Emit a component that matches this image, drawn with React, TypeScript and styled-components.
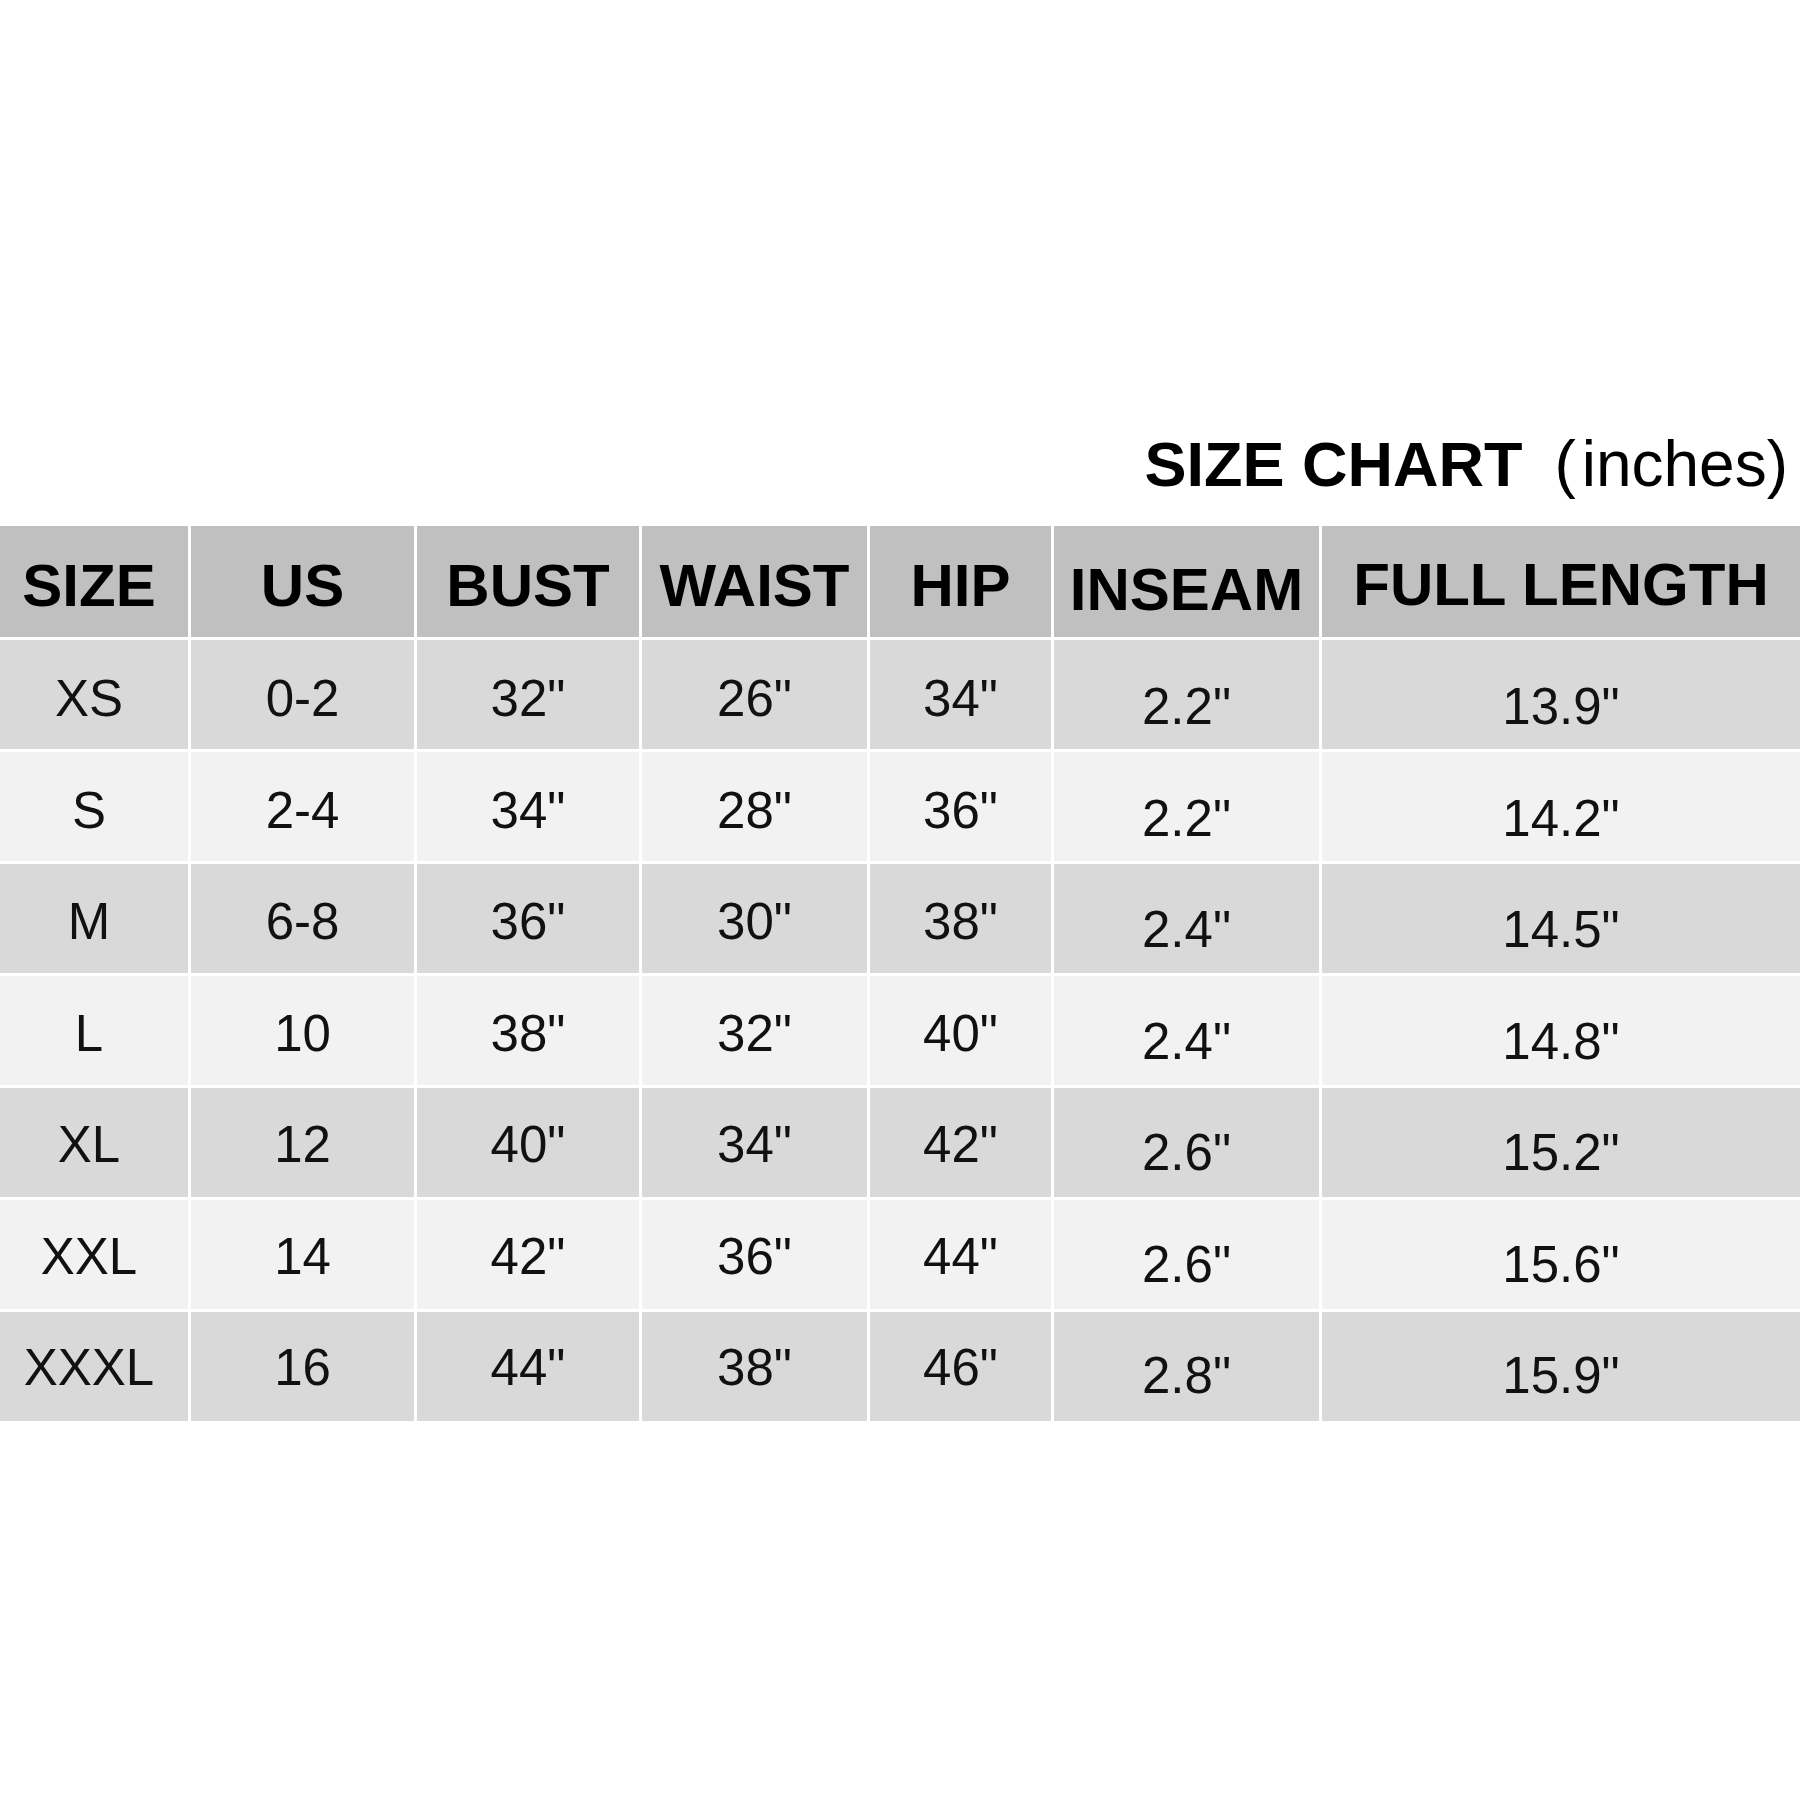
import React from "react";
import styled, { createGlobalStyle } from "styled-components";

const Global = createGlobalStyle`
  html, body {
    margin: 0;
    padding: 0;
    background: #ffffff;
  }
  body {
    font-family: "Liberation Sans", Arial, sans-serif;
    color: #000;
  }
`;

const Page = styled.div`
  width: 1800px;
  height: 1800px;
  box-sizing: border-box;
  padding-top: 432px;
  display: flex;
  flex-direction: column;
  background: #ffffff;
`;

const Title = styled.div`
  height: 64px;
  margin-bottom: 30px;
  padding-right: 12px;
  display: flex;
  justify-content: flex-end;
  align-items: baseline;
  line-height: 1;
  color: #000;
  font-family: "Liberation Sans", Arial, sans-serif;
`;

const TitleMain = styled.span`
  font-weight: 700;
  font-size: 63px;
  margin-right: 32px;
`;

const TitleUnit = styled.span`
  font-weight: 400;
  font-size: 64px;
`;

const Paren = styled.span`
  margin-right: 6px;
`;

const Table = styled.div`
  display: grid;
  grid-template-columns: 188px 223px 222px 225px 181px 265px 1fr;
  grid-template-rows: 111px;
  grid-auto-rows: 109px;
  column-gap: 3px;
  row-gap: 3px;
  background: #ffffff;
`;

const HeadCell = styled.div<{ $shift: number; $first: boolean }>`
  background: #c0c0c0;
  display: flex;
  align-items: center;
  justify-content: center;
  box-sizing: border-box;
  padding-top: ${(p) => 8 + p.$shift * 2}px;
  padding-right: ${(p) => (p.$first ? 10 : 0)}px;
  font-family: "Liberation Sans", Arial, sans-serif;
  font-weight: 700;
  font-size: 60px;
  line-height: 1;
  color: #000;
  white-space: nowrap;
`;

const Cell = styled.div<{ $odd: boolean; $drop: number; $first: boolean }>`
  background: ${(p) => (p.$odd ? "#d9d9d9" : "#f2f2f2")};
  display: flex;
  align-items: center;
  justify-content: center;
  box-sizing: border-box;
  padding-top: ${(p) => p.$drop}px;
  padding-right: ${(p) => (p.$first ? 10 : 0)}px;
  font-family: "Liberation Sans", Arial, sans-serif;
  font-weight: 400;
  font-size: 51px;
  line-height: 1;
  color: #111;
  white-space: nowrap;
`;

const headers: { label: string; shift: number }[] = [
  { label: "SIZE", shift: 0 },
  { label: "US", shift: 0 },
  { label: "BUST", shift: 0 },
  { label: "WAIST", shift: 0 },
  { label: "HIP", shift: 0 },
  { label: "INSEAM", shift: 4 },
  { label: "FULL LENGTH", shift: -1 },
];

const rows: string[][] = [
  ["XS", "0-2", '32"', '26"', '34"', '2.2"', '13.9"'],
  ["S", "2-4", '34"', '28"', '36"', '2.2"', '14.2"'],
  ["M", "6-8", '36"', '30"', '38"', '2.4"', '14.5"'],
  ["L", "10", '38"', '32"', '40"', '2.4"', '14.8"'],
  ["XL", "12", '40"', '34"', '42"', '2.6"', '15.2"'],
  ["XXL", "14", '42"', '36"', '44"', '2.6"', '15.6"'],
  ["XXXL", "16", '44"', '38"', '46"', '2.8"', '15.9"'],
];

export default function App() {
  return (
    <>
      <Global />
      <Page>
        <Title>
          <TitleMain>SIZE CHART</TitleMain>
          <TitleUnit>
            <Paren>(</Paren>inches)
          </TitleUnit>
        </Title>
        <Table>
          {headers.map((h, i) => (
            <HeadCell key={h.label} $shift={h.shift} $first={i === 0}>
              {h.label}
            </HeadCell>
          ))}
          {rows.map((r, ri) =>
            r.map((v, ci) => (
              <Cell
                key={`${ri}-${ci}`}
                $odd={ri % 2 === 0}
                $drop={ci >= 5 ? 24 - ri : 8 - ri}
                $first={ci === 0}
              >
                {v}
              </Cell>
            ))
          )}
        </Table>
      </Page>
    </>
  );
}
